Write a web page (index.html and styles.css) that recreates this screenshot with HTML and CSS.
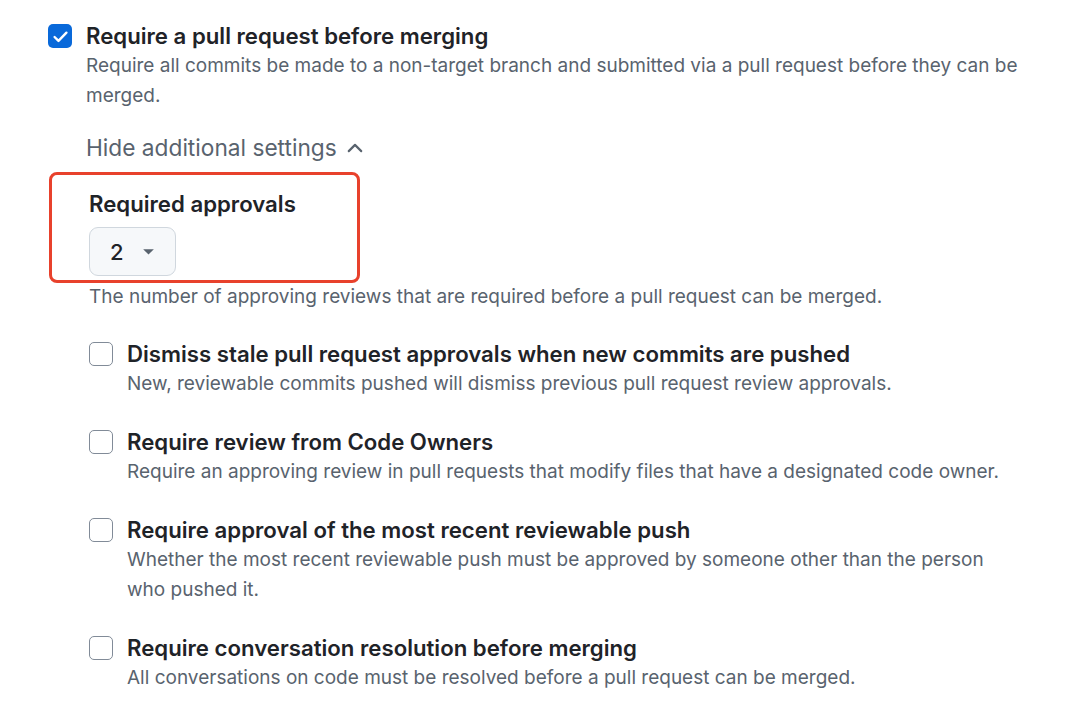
FILE: index.html
```html
<!DOCTYPE html>
<html lang="en">

<head>
    <meta charset="UTF-8">
    <title>Branch protection</title>
    <link rel="stylesheet" href="styles.css">
</head>

<body>
    <div class="page">
        <div class="rule">
            <span class="box box--checked">
                <svg viewBox="0 0 16 16" width="19" height="19"><path d="M3 8.4l3.3 3.3L13 4.8" fill="none" stroke="#fff" stroke-width="2" stroke-linecap="round" stroke-linejoin="round"/></svg>
            </span>
            <div class="rule__body">
                <div class="rule__title">Require a pull request before merging</div>
                <div class="rule__desc">Require all commits be made to a non-target branch and submitted via a pull request before they can be merged.</div>

                <div class="settings">
                    <div class="toggle">Hide additional settings
                        <svg viewBox="0 0 16 16" width="20" height="20"><path d="M3 10.5L8 5.5l5 5" fill="none" stroke="#59636e" stroke-width="1.7" stroke-linecap="round" stroke-linejoin="round"/></svg>
                    </div>

                    <div class="highlight">
                        <div class="field__label">Required approvals</div>
                        <button class="select">2
                            <svg viewBox="0 0 16 16" width="19" height="19"><path d="M3.5 6h9L8 10.5z" fill="#59636e"/></svg>
                        </button>
                    </div>
                    <div class="field__note">The number of approving reviews that are required before a pull request can be merged.</div>

                    <div class="sub">
                        <span class="box"></span>
                        <div class="rule__body">
                            <div class="rule__title">Dismiss stale pull request approvals when new commits are pushed</div>
                            <div class="rule__desc">New, reviewable commits pushed will dismiss previous pull request review approvals.</div>
                        </div>
                    </div>
                    <div class="sub">
                        <span class="box"></span>
                        <div class="rule__body">
                            <div class="rule__title">Require review from Code Owners</div>
                            <div class="rule__desc">Require an approving review in pull requests that modify files that have a designated code owner.</div>
                        </div>
                    </div>
                    <div class="sub">
                        <span class="box"></span>
                        <div class="rule__body">
                            <div class="rule__title">Require approval of the most recent reviewable push</div>
                            <div class="rule__desc">Whether the most recent reviewable push must be approved by someone other than the person who pushed it.</div>
                        </div>
                    </div>
                    <div class="sub">
                        <span class="box"></span>
                        <div class="rule__body">
                            <div class="rule__title">Require conversation resolution before merging</div>
                            <div class="rule__desc">All conversations on code must be resolved before a pull request can be merged.</div>
                        </div>
                    </div>
                </div>
            </div>
        </div>
    </div>
</body>
</html>
```

FILE: styles.css
```css
body {
    margin: 0;
    background-color: #ffffff;
    font-family: 'Inter', 'Noto Sans', sans-serif;
    color: #1f2328;
}

.page {
    padding: 21px 54px 0 48px;
}

.rule,
.sub {
    display: flex;
    gap: 14px;
}

.box {
    flex: none;
    box-sizing: border-box;
    width: 24px;
    height: 24px;
    margin-top: 3px;
    border: 1.5px solid #818b98;
    border-radius: 5px;
    background-color: #ffffff;
    display: flex;
    align-items: center;
    justify-content: center;
}

.box--checked {
    border: none;
    background-color: #0969da;
}

.rule__title {
    font-size: 22.2px;
    font-weight: 600;
    line-height: 30px;
}

.rule__desc {
    font-size: 19px;
    line-height: 30px;
    color: #59636e;
}

.toggle {
    margin-top: 22px;
    font-size: 22.7px;
    line-height: 30px;
    color: #59636e;
    display: flex;
    align-items: center;
    gap: 8px;
}

.highlight {
    margin: 9px 0 0 -37px;
    width: 311px;
    box-sizing: border-box;
    padding: 14px 0 4px 37px;
    border: 3px solid #e8412c;
    border-radius: 8px;
}

.field__label {
    font-size: 22.2px;
    font-weight: 600;
    line-height: 30px;
}

.select {
    margin-top: 8px;
    width: 87px;
    height: 49px;
    box-sizing: border-box;
    padding: 0 0 0 20px;
    border: 1px solid #d0d7de;
    border-radius: 9px;
    background-color: #f6f8fa;
    font-family: inherit;
    font-size: 22px;
    font-weight: 500;
    color: #1f2328;
    display: flex;
    align-items: center;
    gap: 15px;
}

.field__note {
    font-size: 19px;
    line-height: 28px;
    color: #59636e;
    padding-left: 3px;
}

.sub {
    margin-top: 28px;
    padding-left: 3px;
}
```
